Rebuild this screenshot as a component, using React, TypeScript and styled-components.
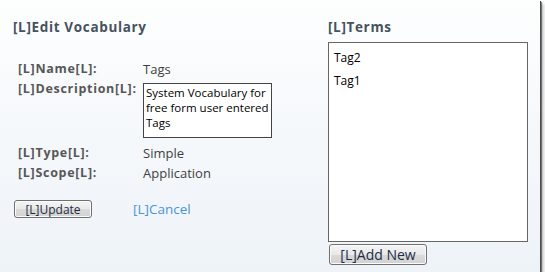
import React from 'react'
import styled, { createGlobalStyle } from 'styled-components'

const GlobalStyle = createGlobalStyle`
  html, body {
    margin: 0;
    padding: 0;
    background: #ffffff;
  }
  body {
    font-family: "Open Sans", "Noto Sans", sans-serif;
  }
`

const Frame = styled.div`
  width: 540px;
  height: 272px;
  box-sizing: border-box;
  display: flex;
  background: linear-gradient(to bottom, #fdfefe 0%, #f5f8fb 50%, #eef3f8 100%);
  box-shadow: 1px 1px 0 #4a4a4a, 2px 2px 1px rgba(0, 0, 0, 0.45), 4px 4px 3px rgba(0, 0, 0, 0.2);
`

const LeftColumn = styled.div`
  width: 328px;
  padding: 19px 0 0 13px;
  box-sizing: border-box;
`

const RightColumn = styled.div`
  padding: 19px 0 0 0;
  display: flex;
  flex-direction: column;
`

const SectionTitle = styled.h2`
  margin: 0;
  height: 16px;
  line-height: 16px;
  font-size: 13.5px;
  letter-spacing: 0.65px;
  font-weight: 700;
  color: #46525e;
  white-space: nowrap;
`

const FormGrid = styled.div`
  margin: 24px 0 0 5px;
  display: grid;
  grid-template-columns: 125px 1fr;
  align-items: start;
`

const Label = styled.div`
  height: 20px;
  line-height: 20px;
  font-size: 12.5px;
  letter-spacing: 0.7px;
  font-weight: 700;
  color: #575757;
  white-space: nowrap;
`

const Value = styled.div`
  height: 20px;
  line-height: 20px;
  font-size: 13px;
  color: #3f3f3f;
`

const DescriptionBox = styled.div`
  width: 129px;
  height: 55px;
  margin: 4px 0 5px 0;
  box-sizing: border-box;
  border: 1px solid #444;
  background: #fff;
  padding: 1px 2px;
  font-size: 11.5px;
  line-height: 15px;
  color: #000;
`

const Actions = styled.div`
  margin: 17px 0 0 1px;
  display: flex;
  align-items: center;
  gap: 41px;
`

const Button = styled.button<{ $w: number; $h: number; $size: number }>`
  width: ${p => p.$w}px;
  height: ${p => p.$h}px;
  padding: 0;
  border: 1px solid #707070;
  border-radius: 3px;
  background: linear-gradient(to bottom, #f4f4f4 0%, #e9e9e9 50%, #dadada 51%, #d2d2d2 100%);
  font-family: "Open Sans", "Noto Sans", sans-serif;
  font-size: ${p => p.$size}px;
  color: #1e2c44;
  box-shadow: inset 0 0 0 1px #fbfbfb;
`

const CancelLink = styled.a`
  font-size: 13.5px;
  color: #4795d2;
  text-decoration: none;
  cursor: pointer;
`

const TermsList = styled.div`
  margin-top: 7px;
  width: 200px;
  height: 200px;
  box-sizing: border-box;
  border: 1px solid #666;
  background: #fff;
  padding: 3px 5px;
`

const TermItem = styled.div`
  height: 23px;
  line-height: 23px;
  font-size: 12px;
  color: #000;
`

const AddRow = styled.div`
  margin: 1px 0 0 1px;
`

const fields = [
  { label: '[L]Name[L]:', value: 'Tags' },
]

const trailing = [
  { label: '[L]Type[L]:', value: 'Simple' },
  { label: '[L]Scope[L]:', value: 'Application' },
]

const terms = ['Tag2', 'Tag1']

const App = () => {
  return (
    <>
      <GlobalStyle />
      <Frame>
        <LeftColumn>
          <SectionTitle>[L]Edit Vocabulary</SectionTitle>
          <FormGrid>
            {fields.map(f => (
              <React.Fragment key={f.label}>
                <Label>{f.label}</Label>
                <Value>{f.value}</Value>
              </React.Fragment>
            ))}
            <Label>[L]Description[L]:</Label>
            <DescriptionBox>System Vocabulary for free form user entered Tags</DescriptionBox>
            {trailing.map(f => (
              <React.Fragment key={f.label}>
                <Label>{f.label}</Label>
                <Value>{f.value}</Value>
              </React.Fragment>
            ))}
          </FormGrid>
          <Actions>
            <Button $w={78} $h={18} $size={12}>[L]Update</Button>
            <CancelLink>[L]Cancel</CancelLink>
          </Actions>
        </LeftColumn>
        <RightColumn>
          <SectionTitle>[L]Terms</SectionTitle>
          <TermsList>
            {terms.map(t => (
              <TermItem key={t}>{t}</TermItem>
            ))}
          </TermsList>
          <AddRow>
            <Button $w={98} $h={21} $size={14}>[L]Add New</Button>
          </AddRow>
        </RightColumn>
      </Frame>
    </>
  )
}

export default App
